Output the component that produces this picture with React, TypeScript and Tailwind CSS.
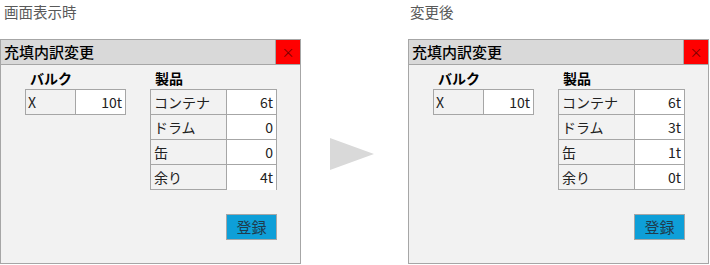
import React from 'react';

type Row = { label: string; value: string; open?: boolean };

const font = { fontFamily: '"Noto Sans CJK JP", "Noto Sans", sans-serif' };

function Dialog({ bulk, rows }: { bulk: string; rows: Row[] }) {
  return (
    <div className="w-[301px] h-[225px] border border-[#a6a6a6] bg-[#f2f2f2] flex flex-col">
      {/* Title bar */}
      <div className="h-[25px] flex items-stretch bg-[#d9d9d9] border-b border-[#a6a6a6]">
        <div className="flex-1 pl-[3px] text-[15px] leading-[24px] text-black font-medium">充填内訳変更</div>
        <div className="w-[25px] bg-[#ff0000] border-l border-[#a6a6a6] flex items-center justify-center text-[13px] text-[#7a0000]">
          ×
        </div>
      </div>

      {/* Body */}
      <div className="flex pt-[3px]">
        {/* Bulk */}
        <div className="ml-[24px] w-[101px]">
          <div className="pl-[5px] h-[21px] text-[14px] leading-[20px] font-bold text-black">バルク</div>
          <div className="flex h-[26px] border border-[#a6a6a6] text-[14px] text-[#222]">
            <div className="w-[50px] border-r border-[#a6a6a6] pl-[2px] leading-[24px]">X</div>
            <div className="flex-1 bg-white text-right pr-[3px] leading-[24px]">{bulk}</div>
          </div>
        </div>

        {/* Products */}
        <div className="ml-[24px] w-[127px] flex flex-col">
          <div className="pl-[5px] h-[21px] text-[14px] leading-[20px] font-bold text-black">製品</div>
          <div className="border-l border-t border-[#a6a6a6] text-[14px] text-[#222]">
            {rows.map((r) => (
              <div key={r.label} className="flex h-[25px]">
                <div className="w-[76px] border-r border-b border-[#a6a6a6] pl-[3px] leading-[24px]">{r.label}</div>
                <div
                  className={
                    r.open
                      ? 'flex-1 bg-white border-r border-[#a6a6a6] text-right pr-[3px] leading-[24px]'
                      : 'flex-1 bg-white border-r border-b border-[#a6a6a6] text-right pr-[3px] leading-[24px]'
                  }
                >
                  {r.value}
                </div>
              </div>
            ))}
          </div>
          <div className="flex justify-end mt-[24px]">
            <div className="w-[51px] h-[26px] bg-[#0e9fd8] border border-[#a6a6a6] text-center text-[15px] leading-[24px] text-[#1f3b4d]">
              登録
            </div>
          </div>
        </div>
      </div>
    </div>
  );
}

export default function App() {
  return (
    <div className="w-[710px] h-[265px] bg-white flex" style={font}>
      <div className="w-[301px] flex flex-col">
        <div className="h-[39px] pl-[4px] pt-[2px] text-[14.5px] leading-[20px] text-[#595959]">画面表示時</div>
        <Dialog
          bulk="10t"
          rows={[
            { label: 'コンテナ', value: '6t' },
            { label: 'ドラム', value: '0' },
            { label: '缶', value: '0' },
            { label: '余り', value: '4t', open: true },
          ]}
        />
      </div>

      <div className="w-[107px] flex justify-center pt-[138px]">
        <svg width="44" height="32" viewBox="0 0 44 32" className="-ml-[5px]">
          <polygon points="0,0 44,16 0,32" fill="#d9d9d9" />
        </svg>
      </div>

      <div className="w-[301px] flex flex-col">
        <div className="h-[39px] pl-[2px] pt-[2px] text-[14.5px] leading-[20px] text-[#595959]">変更後</div>
        <Dialog
          bulk="10t"
          rows={[
            { label: 'コンテナ', value: '6t' },
            { label: 'ドラム', value: '3t' },
            { label: '缶', value: '1t' },
            { label: '余り', value: '0t' },
          ]}
        />
      </div>
    </div>
  );
}
